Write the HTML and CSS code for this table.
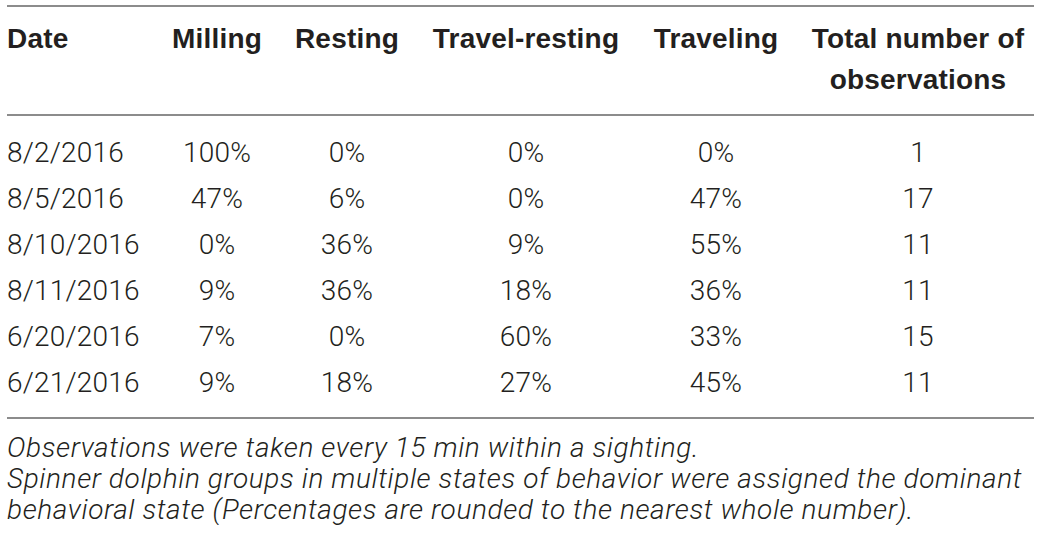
FILE: index.html
```html
<!DOCTYPE html>
<html lang="en">
<head>
    <meta charset="UTF-8">
    <title>Behavioral states of spinner dolphins</title>
    <link rel="stylesheet" href="styles.css">
</head>
<body>
    <div class="wrap">
        <table class="states">
            <colgroup>
                <col class="c-date">
                <col class="c-mill">
                <col class="c-rest">
                <col class="c-trest">
                <col class="c-trav">
                <col class="c-total">
            </colgroup>
            <thead>
                <tr>
                    <th class="left">Date</th>
                    <th>Milling</th>
                    <th>Resting</th>
                    <th>Travel-resting</th>
                    <th>Traveling</th>
                    <th>Total number of<br>observations</th>
                </tr>
            </thead>
            <tbody>
                <tr><td class="left">8/2/2016</td><td>100%</td><td>0%</td><td>0%</td><td>0%</td><td>1</td></tr>
                <tr><td class="left">8/5/2016</td><td>47%</td><td>6%</td><td>0%</td><td>47%</td><td>17</td></tr>
                <tr><td class="left">8/10/2016</td><td>0%</td><td>36%</td><td>9%</td><td>55%</td><td>11</td></tr>
                <tr><td class="left">8/11/2016</td><td>9%</td><td>36%</td><td>18%</td><td>36%</td><td>11</td></tr>
                <tr><td class="left">6/20/2016</td><td>7%</td><td>0%</td><td>60%</td><td>33%</td><td>15</td></tr>
                <tr><td class="left">6/21/2016</td><td>9%</td><td>18%</td><td>27%</td><td>45%</td><td>11</td></tr>
            </tbody>
        </table>
        <div class="notes">
            <p>Observations were taken every 15 min within a sighting.</p>
            <p>Spinner dolphin groups in multiple states of behavior were assigned the dominant<br>behavioral state (Percentages are rounded to the nearest whole number).</p>
        </div>
    </div>
</body>
</html>
```

FILE: styles.css
```css
body {
    margin: 0;
    background: #fff;
    color: #231f20;
    font-family: "Roboto", "Liberation Sans", sans-serif;
    font-weight: 300;
}
.wrap {
    padding: 5px 6px 0 7px;
}
.states {
    width: 1027px;
    border-collapse: collapse;
    table-layout: fixed;
    border-top: 2px solid #8c8c8c;
    border-bottom: 2px solid #8c8c8c;
}
.c-date { width: 155px; }
.c-mill { width: 110px; }
.c-rest { width: 150px; }
.c-trest { width: 208px; }
.c-trav { width: 172px; }
.c-total { width: 232px; }
th, td {
    padding: 0;
    text-align: center;
    white-space: nowrap;
}
.left {
    text-align: left;
}
thead th {
    font-family: "Liberation Sans", sans-serif;
    font-weight: 700;
    font-size: 28px;
    letter-spacing: 0.2px;
    line-height: 41px;
    vertical-align: top;
    padding: 11px 0 14px;
    border-bottom: 2px solid #8c8c8c;
}
tbody td {
    font-size: 28px;
    height: 46px;
    line-height: 46px;
    letter-spacing: 0.2px;
}
tbody tr:first-child td {
    padding-top: 14px;
}
tbody tr:last-child td {
    padding-bottom: 11px;
}
.notes {
    font-size: 28px;
    font-style: italic;
    letter-spacing: 0.6px;
    line-height: 31px;
    padding-top: 13px;
}
.notes p {
    margin: 0;
    white-space: nowrap;
}
```
